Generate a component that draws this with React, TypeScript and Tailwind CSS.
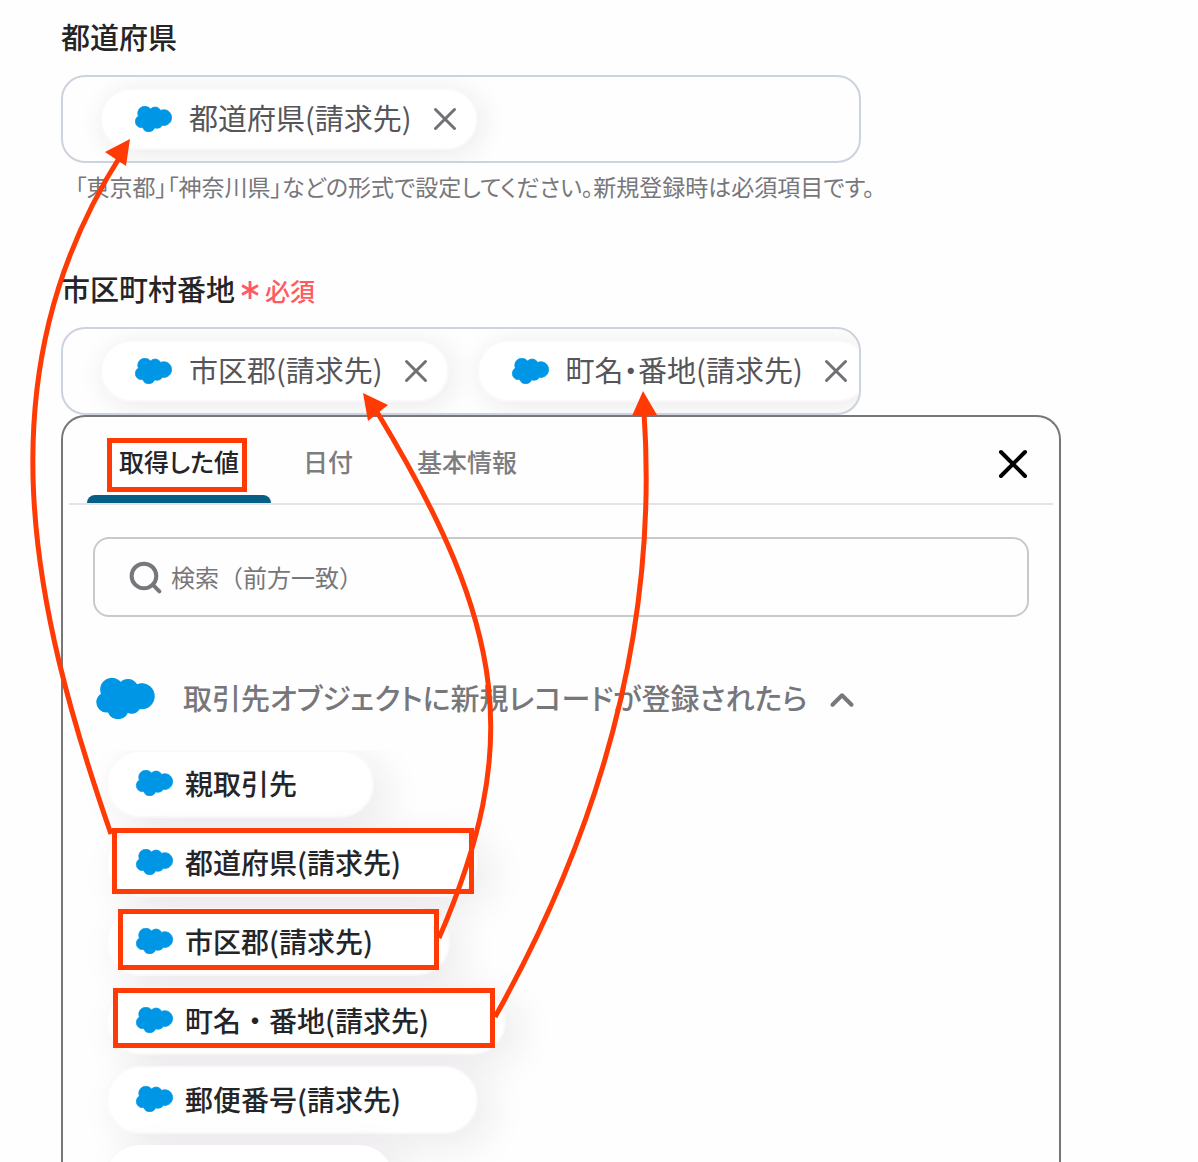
import { useState } from "react";
import { ChevronUp, Search, X } from "lucide-react";

const tabs = ["取得した値", "日付", "基本情報"];

const values = [
  "親取引先",
  "都道府県(請求先)",
  "市区郡(請求先)",
  "町名・番地(請求先)",
  "郵便番号(請求先)",
];

function Cloud({ className }: { className: string }) {
  return (
    <svg viewBox="-0.2 3.4 24.4 17.2" className={className} fill="#0096e6" stroke="#0096e6" strokeWidth="0.5" strokeLinejoin="round" aria-hidden="true">
      <path d="M10.006 5.415a4.195 4.195 0 0 1 3.045-1.306c1.56 0 2.954.9 3.69 2.205.63-.3 1.35-.45 2.1-.45 2.85 0 5.159 2.34 5.159 5.22s-2.31 5.22-5.176 5.22c-.345 0-.69-.044-1.02-.104a3.75 3.75 0 0 1-3.3 1.95c-.6 0-1.155-.15-1.65-.375A4.314 4.314 0 0 1 8.88 20.4a4.302 4.302 0 0 1-4.05-2.82c-.27.062-.54.076-.825.076C1.801 17.656 0 15.856 0 13.606c0-1.5.811-2.805 2.01-3.51-.255-.57-.39-1.2-.39-1.846 0-2.58 2.1-4.65 4.65-4.65 1.53 0 2.85.705 3.736 1.815Z" />
    </svg>
  );
}

function RequiredMark() {
  return (
    <svg width="18" height="20" viewBox="0 0 18 20" fill="none" stroke="currentColor" strokeWidth="2.8" aria-hidden="true">
      <path d="M9 1v18M1 5.5l16 9M17 5.5l-16 9" />
    </svg>
  );
}

function Chip({ label }: { label: string }) {
  return (
    <span className="flex h-[62px] shrink-0 items-center rounded-full border-2 border-[#faf8fa] bg-white pl-[33px] pr-3 shadow-[4px_4px_28px_rgba(50,30,60,0.09)]">
      <Cloud className="h-[26px] w-[37px]" />
      <span className="ml-[17px] whitespace-nowrap pb-1 text-[29px] leading-10 text-[#55555a]">{label}</span>
      <button type="button" aria-label={`${label}を削除`} className="ml-[14px]">
        <X size={38} strokeWidth={3} absoluteStrokeWidth className="text-[#707075]" />
      </button>
    </span>
  );
}

function Field({
  id,
  label,
  required,
  chips,
  hint,
}: {
  id: string;
  label: string;
  required?: boolean;
  chips: string[];
  hint?: string;
}) {
  return (
    <section role="group" aria-labelledby={id}>
      <div className="flex h-10 items-center">
        <h2 id={id} className="text-[29px] font-medium leading-10 text-[#252528]">
          {label}
        </h2>
        {required && (
          <span className="ml-[6px] flex items-center pt-1 text-[25px] font-medium leading-10 text-[#ff5a60]">
            <RequiredMark />
            <span className="ml-[6px]">必須</span>
          </span>
        )}
      </div>
      <div className="mt-[19px] flex h-[88px] max-w-[800px] items-center gap-7 overflow-hidden rounded-[24px] border-2 border-[#cdd2df] pl-[37px]">
        {chips.map((chip) => (
          <Chip key={chip} label={chip} />
        ))}
      </div>
      {hint && <p className="mt-[7px] pl-[14px] text-[23px] leading-8 text-[#77777b]">{hint}</p>}
    </section>
  );
}

// Red callouts that link each value in the list to its field
function Annotations() {
  return (
    <svg
      className="pointer-events-none absolute left-0 top-0"
      width="1198"
      height="1162"
      viewBox="0 0 1198 1162"
      fill="none"
      stroke="#ff3a05"
      strokeWidth="5"
      aria-hidden="true"
    >
      <rect x="109.5" y="440.5" width="135" height="49" />
      <rect x="114.5" y="830.5" width="357" height="61" />
      <rect x="120.5" y="911.5" width="316" height="56" />
      <rect x="115.5" y="990.5" width="377" height="55" />
      <path d="M111 834C31 604-19 375 121 155" />
      <path d="M439 938C522 746 508 628 377 412" />
      <path d="M495 1017C614 805 657 604 644 412" />
      <g fill="#ff3a05" stroke="none">
        <path d="M130 139 105 152 126 166Z" />
        <path d="M363 393 388 405 368 421Z" />
        <path d="M643 391 632 416 657 415Z" />
      </g>
    </svg>
  );
}

export default function App() {
  const [active, setActive] = useState(tabs[0]);
  const [query, setQuery] = useState("");

  return (
    <main
      lang="ja"
      className="relative flex h-screen flex-col overflow-hidden bg-[#fefefe] px-[61px] pt-4 font-['Noto_Sans_CJK_JP',sans-serif]"
    >
      <div className="flex shrink-0 flex-col gap-[66px] [font-feature-settings:'palt']">
        <Field
          id="prefecture"
          label="都道府県"
          chips={["都道府県(請求先)"]}
          hint="「東京都」「神奈川県」などの形式で設定してください。新規登録時は必須項目です。"
        />
        <Field
          id="address"
          label="市区町村番地"
          required
          chips={["市区郡(請求先)", "町名・番地(請求先)"]}
        />
      </div>

      <div className="flex min-h-0 w-full max-w-[1000px] flex-1 flex-col rounded-t-[24px] border-2 border-b-0 border-[#77777b] bg-[#fefefe]">
        {/* Tabs */}
        <div className="mx-[6px] flex h-[88px] shrink-0 items-stretch border-b-2 border-[#e4e4e6] pl-[18px] pr-4 [font-feature-settings:'palt']">
          <div role="tablist" className="flex">
            {tabs.map((tab) => (
              <button
                key={tab}
                type="button"
                role="tab"
                aria-selected={tab === active}
                onClick={() => setActive(tab)}
                className={`relative px-8 pt-1 text-[25px] font-medium ${
                  tab === active ? "text-[#252528]" : "text-[#7d7d80]"
                }`}
              >
                {tab}
                {tab === active && (
                  <span className="absolute inset-x-0 bottom-0 h-2 rounded-t-lg bg-[#085f86]" />
                )}
              </button>
            ))}
          </div>
          <button type="button" aria-label="閉じる" className="ml-auto pt-2">
            <X size={48} strokeWidth={4} absoluteStrokeWidth className="text-black" />
          </button>
        </div>

        {/* Search */}
        <label className="mx-[30px] mt-8 flex h-20 shrink-0 items-center rounded-[16px] border-2 border-[#c9c9cc] pl-8">
          <Search size={37} strokeWidth={4} absoluteStrokeWidth className="text-[#77777b]" />
          <input
            type="text"
            aria-label="検索"
            value={query}
            onChange={(e) => setQuery(e.target.value)}
            placeholder="検索（前方一致）"
            className="ml-[7px] min-w-0 flex-1 bg-transparent text-[24px] leading-9 outline-none placeholder:text-[#77777b]"
          />
        </label>

        {/* Group heading */}
        <button
          type="button"
          aria-expanded="true"
          className="mt-[61px] flex h-10 shrink-0 items-center pl-[33px] text-[#77777b]"
        >
          <Cloud className="h-[41px] w-[59px]" />
          <span className="ml-7 whitespace-nowrap pb-[2px] text-[29px] font-medium leading-10 [font-feature-settings:'palt']">
            取引先オブジェクトに新規レコードが登録されたら
          </span>
          <ChevronUp size={38} strokeWidth={4} absoluteStrokeWidth className="ml-4 mt-1" />
        </button>

        {/* Values */}
        <ul className="mt-8 flex min-h-0 flex-1 flex-col items-start gap-[11px] overflow-hidden pl-[43px]">
          {values.map((value) => (
            <li key={value} className="shrink-0">
              <button
                type="button"
                className="flex h-[68px] items-center rounded-full border-2 border-[#fbf9fb] bg-white pb-[2px] pl-7 pr-[75px] shadow-[12px_10px_40px_rgba(50,30,60,0.09)]"
              >
                <Cloud className="h-[26px] w-[37px]" />
                <span className="ml-3 whitespace-nowrap text-[28px] font-medium leading-10 text-[#252528]">
                  {value}
                </span>
              </button>
            </li>
          ))}
          <li className="h-[68px] w-[287px] shrink-0 rounded-full bg-white shadow-[12px_10px_40px_rgba(50,30,60,0.09)]" />
        </ul>
      </div>

      <Annotations />
    </main>
  );
}
